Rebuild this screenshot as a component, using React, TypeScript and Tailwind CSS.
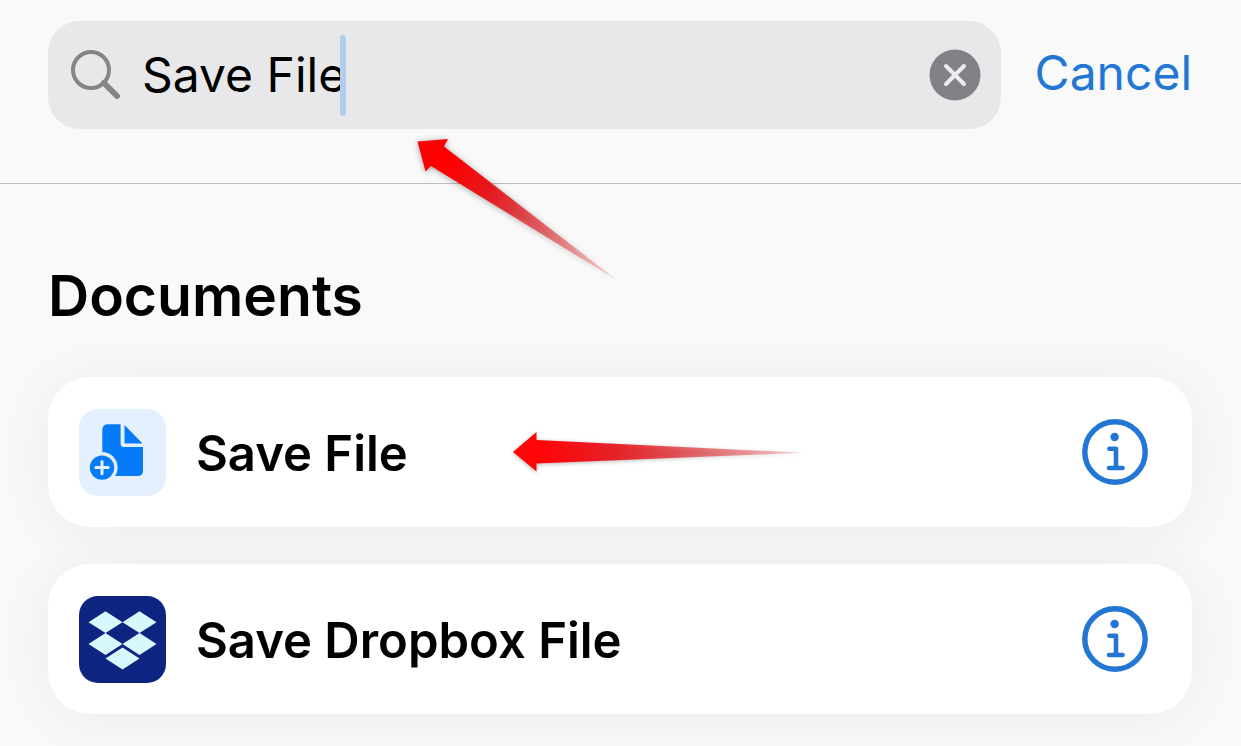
import { useState } from "react";
import type { ReactNode } from "react";

type Action = {
  id: string;
  title: string;
  icon: ReactNode;
};

function SearchIcon() {
  return (
    <svg viewBox="0 0 52 52" className="size-[52px] shrink-0" fill="none" stroke="#858587" aria-hidden="true">
      <circle cx="21" cy="21" r="18" strokeWidth="4" />
      <path d="M34 34 47 47" strokeWidth="6" strokeLinecap="round" />
    </svg>
  );
}

function ClearIcon() {
  return (
    <svg viewBox="0 0 52 52" className="size-[52px]" fill="none" aria-hidden="true">
      <circle cx="26" cy="26" r="25.5" fill="#828286" />
      <path d="m17 17 18 18m0-18-18 18" stroke="#ececee" strokeWidth="4" strokeLinecap="round" />
    </svg>
  );
}

function InfoIcon() {
  return (
    <svg viewBox="0 0 66 66" className="size-[66px]" fill="none" stroke="#2376d3" aria-hidden="true">
      <circle cx="33" cy="33" r="30.2" strokeWidth="5.4" />
      <circle cx="32.6" cy="18" r="4.2" fill="#2376d3" stroke="none" />
      <path
        d="M27.4 29.7H34V49M27 49H40.6"
        strokeWidth="4.6"
        strokeLinecap="round"
        strokeLinejoin="round"
      />
    </svg>
  );
}

function SaveFileIcon() {
  return (
    <svg viewBox="0 0 87 87" className="size-[87px] shrink-0" aria-hidden="true">
      <rect width="87" height="87" rx="19" fill="#e4f0fd" />
      <path
        d="M29 15.3H41.6V34.5Q41.6 38 45 38H64V61.5Q64 67 58.5 67H29Q23.3 67 23.3 61.5V21Q23.3 15.3 29 15.3Z"
        fill="#067bf8"
      />
      <path d="M45.5 16 63.5 34.4H46.5Q45.5 34.4 45.5 33.4Z" fill="#067bf8" />
      <circle cx="23" cy="58.6" r="15.6" fill="#e4f0fd" />
      <circle cx="23" cy="58.6" r="12.2" fill="#067bf8" />
      <path d="M16.8 58.6H29.2M23 52.4V64.8" stroke="#e4f0fd" strokeWidth="3" strokeLinecap="round" />
    </svg>
  );
}

function DropboxIcon() {
  return (
    <svg viewBox="0 0 87 87" className="size-[87px] shrink-0" aria-hidden="true">
      <rect width="87" height="87" rx="19" fill="#0d2481" />
      <g fill="#d8f8fe">
        <path d="m26.5 15.3 17 10.9-17 10.9-17-10.9Z" />
        <path d="m60.5 15.3 17 10.9-17 10.9-17-10.9Z" />
        <path d="m26.5 37.1 17 10.9-17 10.9-17-10.9Z" />
        <path d="m60.5 37.1 17 10.9-17 10.9-17-10.9Z" />
        <path d="m43.5 51.6 17 10.9-17 10.9-17-10.9Z" />
      </g>
    </svg>
  );
}

// Callout arrow below the search field
function DiagonalArrow() {
  return (
    <svg
      viewBox="0 0 220 160"
      className="pointer-events-none absolute left-[408px] top-[130px] z-10 h-[160px] w-[220px] drop-shadow-[0_1px_3px_rgba(0,0,0,0.35)]"
      aria-hidden="true"
    >
      <defs>
        <linearGradient id="diagonal-fade" gradientUnits="userSpaceOnUse" x1="10" y1="12" x2="210" y2="151">
          <stop offset="0.15" stopColor="#ff0000" />
          <stop offset="0.35" stopColor="#e80c10" stopOpacity="0.93" />
          <stop offset="1" stopColor="#e02028" stopOpacity="0.15" />
        </linearGradient>
      </defs>
      <path d="M9.5 11.5 40 9 36 16.5 210 151 23 36 17.5 41.5Z" fill="url(#diagonal-fade)" />
    </svg>
  );
}

function StraightArrow() {
  return (
    <svg
      viewBox="0 0 300 50"
      className="pointer-events-none absolute left-[460px] top-[50px] h-[50px] w-[300px] drop-shadow-[0_1px_2px_rgba(0,0,0,0.3)]"
      aria-hidden="true"
    >
      <defs>
        <linearGradient id="straight-fade" gradientUnits="userSpaceOnUse" x1="5" y1="25" x2="297" y2="25">
          <stop offset="0.1" stopColor="#ff0508" />
          <stop offset="0.35" stopColor="#e8141a" stopOpacity="0.92" />
          <stop offset="1" stopColor="#e02028" stopOpacity="0.2" />
        </linearGradient>
      </defs>
      <path d="M5 25 28.5 5V13L296 25.7 28.5 36.5V44.5Z" fill="url(#straight-fade)" />
    </svg>
  );
}

const actions: Action[] = [
  { id: "save-file", title: "Save File", icon: <SaveFileIcon /> },
  { id: "save-dropbox-file", title: "Save Dropbox File", icon: <DropboxIcon /> },
];

function SearchHeader() {
  const [query, setQuery] = useState("Save File");

  return (
    <header className="relative flex items-center gap-[34px] border-b border-[#bdbdbf] pb-[54px] pl-12 pr-[49px] pt-[21px]">
      <div className="flex h-[108px] min-w-0 flex-1 items-center rounded-[32px] bg-[#e8e8ea] pl-[22px] pr-5">
        <SearchIcon />
        <div className="ml-5 flex min-w-0 flex-1 items-center">
          <input
            type="text"
            aria-label="Search actions"
            value={query}
            onChange={(e) => setQuery(e.target.value)}
            className="field-sizing-content min-w-0 bg-transparent text-[48px] leading-[60px] text-black caret-transparent outline-none"
          />
          {/* Wide caret after the typed text */}
          <span className="-ml-1.5 h-[81px] w-[6px] shrink-0 rounded-full bg-[#b0cfec]" />
        </div>
        <button type="button" aria-label="Clear text" onClick={() => setQuery("")}>
          <ClearIcon />
        </button>
      </div>
      <button type="button" className="pb-1 text-[48px] leading-[60px] text-[#2277d5]">
        Cancel
      </button>
      <DiagonalArrow />
    </header>
  );
}

function ActionCard({ action, children }: { action: Action; children?: ReactNode }) {
  return (
    <li className="relative flex h-[150px] items-center rounded-[42px] bg-white pl-[31px] pr-11 shadow-[0_4px_60px_rgba(0,0,0,0.06)]">
      {action.icon}
      <h3 className="ml-[30px] flex-1 pt-1 text-[49px] font-semibold leading-[60px] text-black">{action.title}</h3>
      <button type="button" aria-label={`About ${action.title}`}>
        <InfoIcon />
      </button>
      {children}
    </li>
  );
}

export default function App() {
  return (
    <div className="min-h-screen overflow-hidden bg-[#f9f9f9] font-['Inter',sans-serif]">
      <SearchHeader />
      <main className="pb-8 pl-12 pr-[49px] pt-[78px]">
        <h2 className="text-[57px] font-semibold leading-[68px] text-black">Documents</h2>
        <ul className="mt-[47px] flex flex-col gap-[37px]">
          {actions.map((action) => (
            <ActionCard key={action.id} action={action}>
              {action.id === "save-file" && <StraightArrow />}
            </ActionCard>
          ))}
        </ul>
      </main>
    </div>
  );
}
